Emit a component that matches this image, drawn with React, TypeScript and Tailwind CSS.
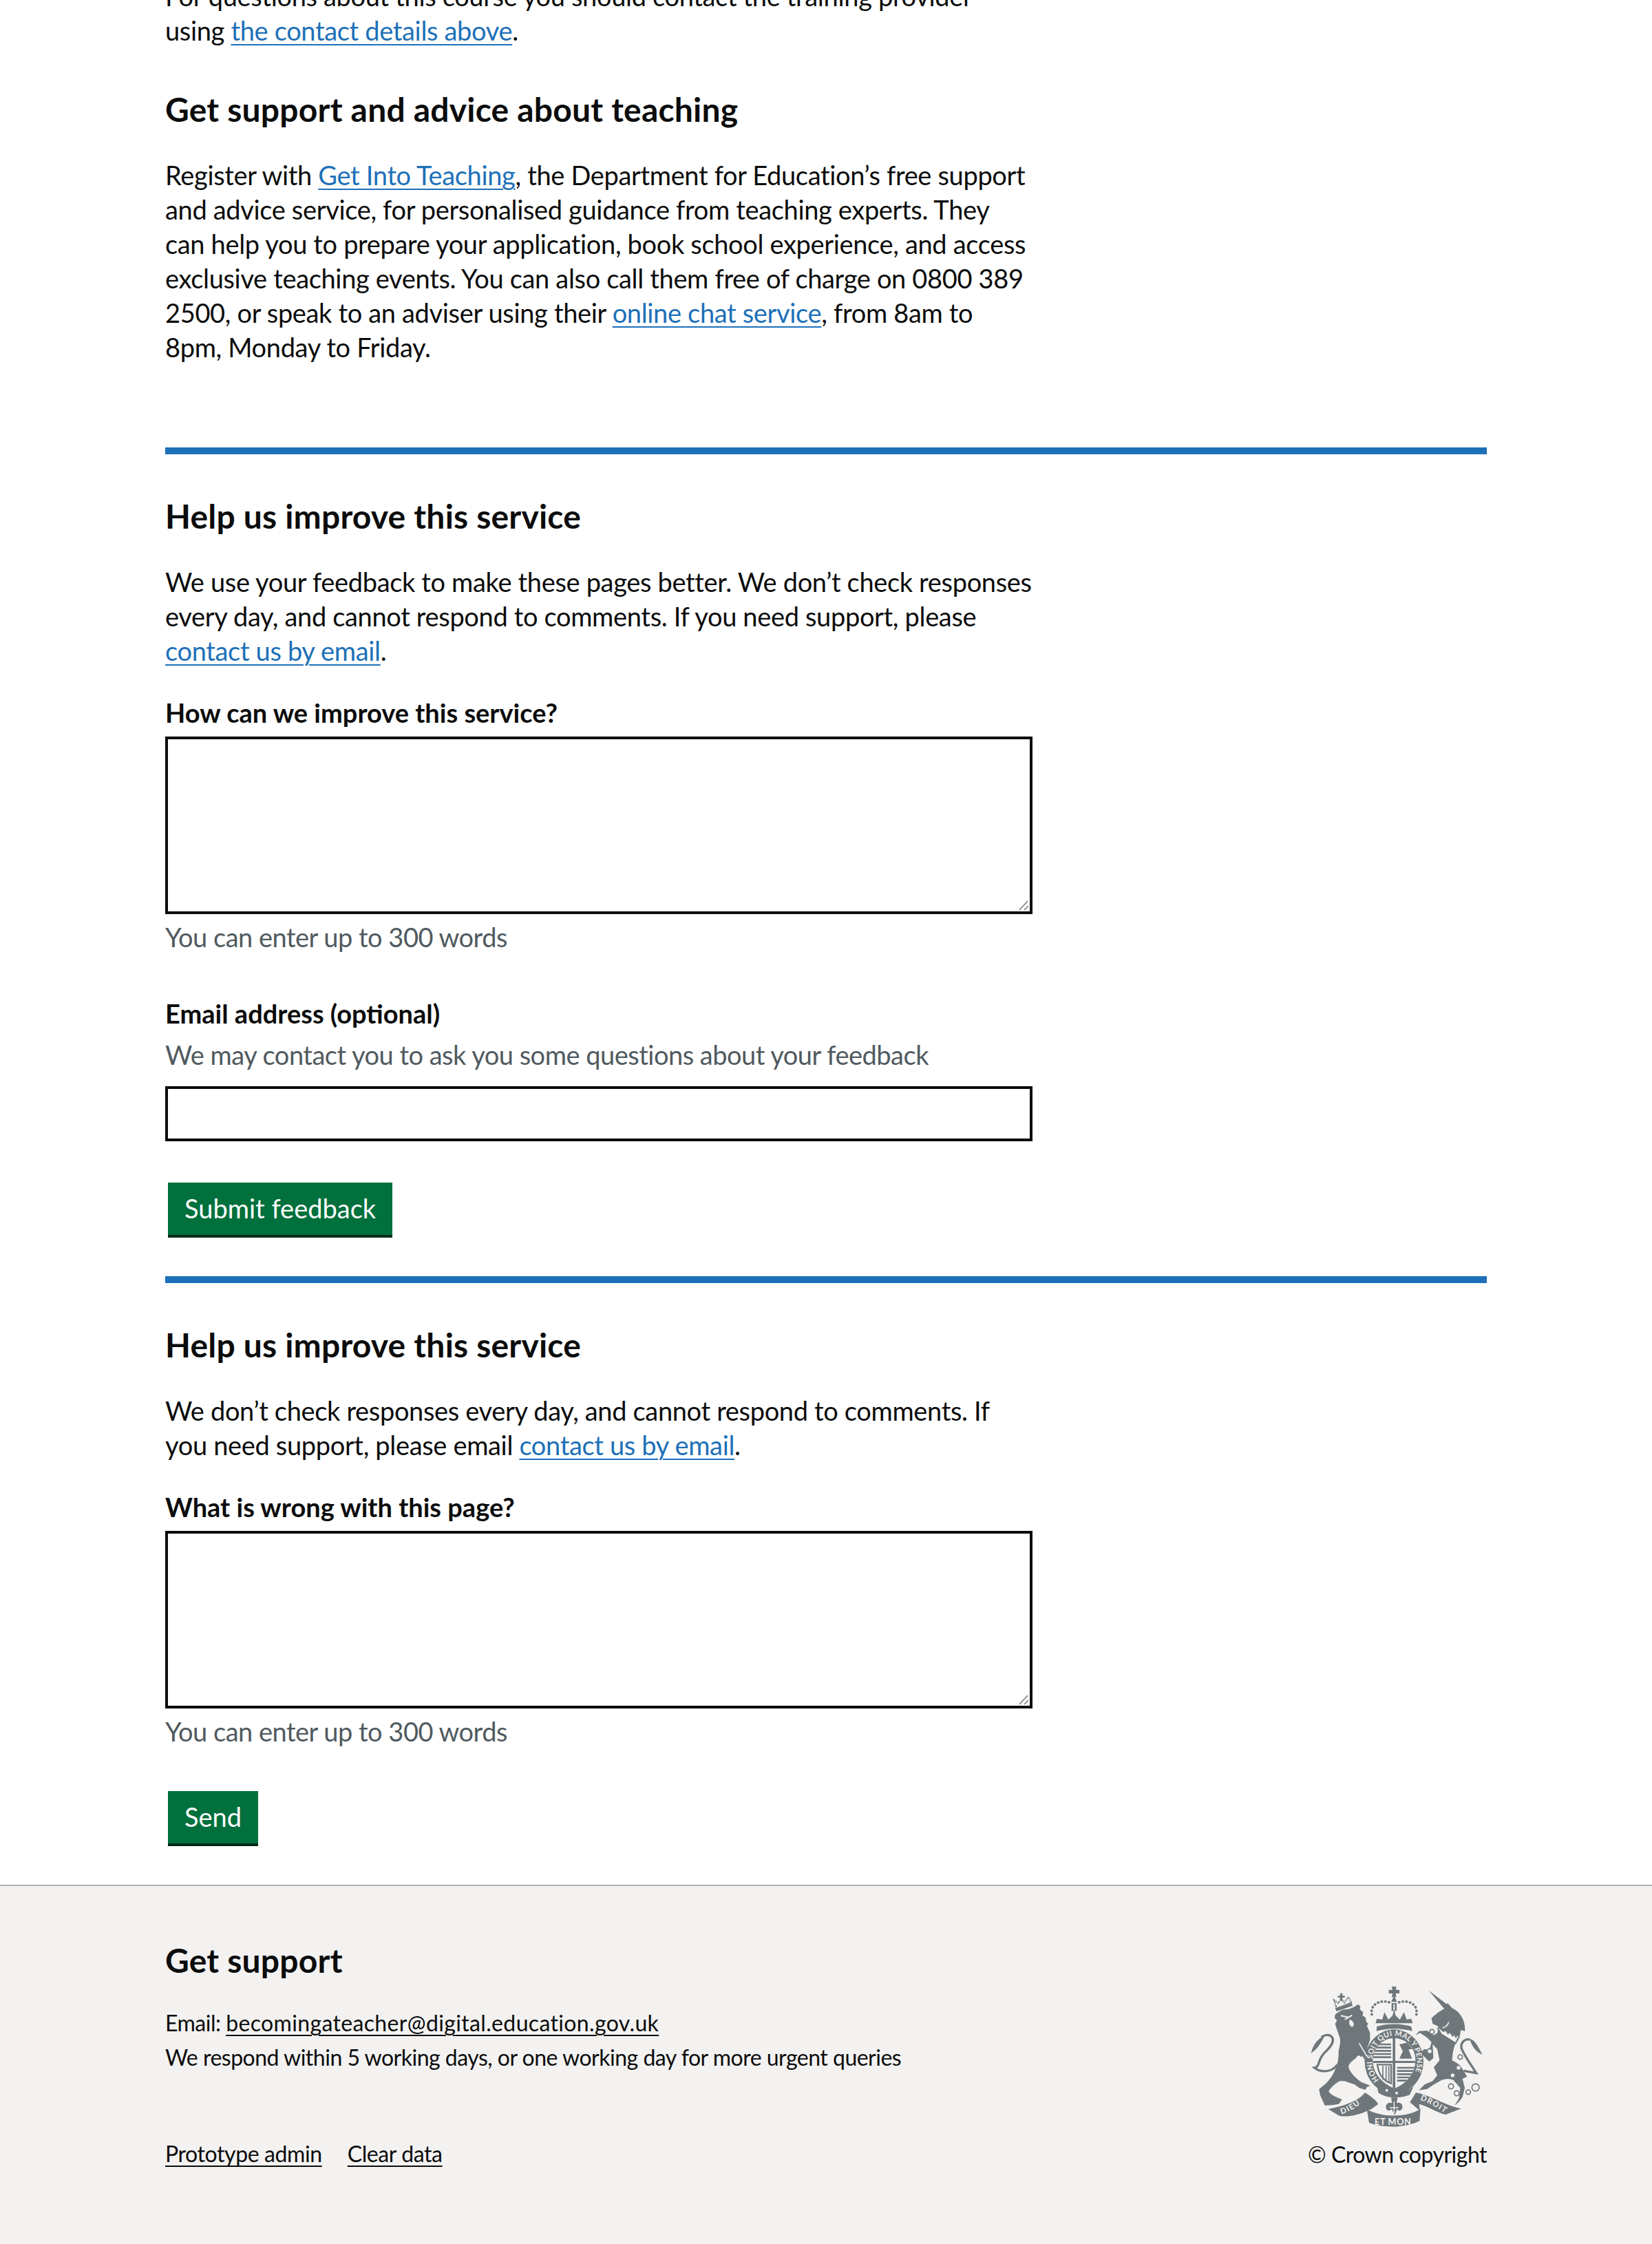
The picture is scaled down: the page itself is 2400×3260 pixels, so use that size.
import React from 'react';

const bodyText = "text-[38px] leading-[50px] tracking-[-0.34px] text-[#0b0c0c]";
const headingText = "text-[48px] leading-[60px] font-bold tracking-[0.2px] text-[#0b0c0c]";
const hintText = "text-[38px] leading-[50px] tracking-[-0.5px] text-[#505a5f]";
const labelText = "block text-[38px] leading-[50px] font-bold tracking-[0px] text-[#0b0c0c]";
const linkText = "text-[#1d70b8] underline decoration-2 underline-offset-[5px]";
const footerText = "text-[32px] leading-[50px] tracking-[-0.5px] text-[#0b0c0c]";
const footerLink = "text-[#0b0c0c] underline decoration-2 underline-offset-[5px]";

const Rule = () => <div className="h-[10px] bg-[#1d70b8]" />;

const GreenButton = ({ children }: { children: React.ReactNode }) => (
	<button className="ml-1 block h-[76px] bg-[#00703c] px-6 pb-0.5 text-[38px] leading-[50px] text-white shadow-[0_4px_0_#002d18]">
		{children}
	</button>
);

const TextArea = () => (
	<div className="relative mt-[10px] h-[258px] w-[1260px]">
		<textarea className="block h-full w-full resize-none border-4 border-[#0b0c0c] bg-white" />
		<svg viewBox="0 0 16 16" className="pointer-events-none absolute bottom-1 right-1 h-4 w-4">
			<path d="M1 14 L13 1 M8 14 L14 8" fill="none" stroke="#767676" strokeWidth="1.5" />
		</svg>
	</div>
);

const Crest = () => (
	<svg viewBox="130 75 756 621" className="block h-[207px] w-[252px]">
		<defs>
			<path id="garter" d="M431 485 A98 112 0 1 1 557 495" />
			<path id="dieu" d="M268 634 C305 622 340 602 368 572" />
			<path id="droit" d="M610 572 C650 585 690 610 722 632" />
			<clipPath id="shield">
				<path d="M497 303 C545 303 590 340 590 400 C590 460 545 505 498 522 C452 505 404 460 404 400 C404 340 450 303 497 303 Z" />
			</clipPath>
		</defs>
		<g fill="#6f777b">
			{/* royal crown */}
			<path d="M422 218 L445 222 L455 190 L472 222 L490 205 L497 178 L504 205 L522 222 L540 190 L552 222 L572 218 L578 238 L416 238 Z" />
			<path d="M422 252 C470 238 525 238 572 252 L576 272 C525 258 470 258 420 272 Z" />
			<path d="M400 200 C390 155 440 130 484 150 M594 200 C604 155 555 130 510 150" fill="none" stroke="#6f777b" strokeWidth="11" strokeDasharray="1 15" strokeLinecap="round" />
			<rect x="486" y="150" width="22" height="34" />
			<rect x="494" y="155" width="6" height="26" fill="#f3f2f1" />
			<path d="M487 78 H507 L504 92 H520 V108 H504 L507 124 H487 L490 108 H474 V92 H490 Z" />
			<path d="M497 118 L510 145 H484 Z" />
			{/* shield and garter */}
			<ellipse cx="497" cy="405" rx="128" ry="140" />
			<path d="M497 303 C545 303 590 340 590 400 C590 460 545 505 498 522 C452 505 404 460 404 400 C404 340 450 303 497 303 Z" fill="#f3f2f1" />
			<g clipPath="url(#shield)">
				<rect x="491" y="300" width="11" height="224" />
				<rect x="400" y="402" width="196" height="9" />
				<path d="M404 330 H484 M404 344 H484 M404 358 H484 M404 372 H484 M404 386 H484 M510 432 H594 M510 446 H594 M510 460 H594 M510 474 H594 M510 488 H594" fill="none" stroke="#6f777b" strokeWidth="8" />
				<path d="M520 330 L555 322 L578 350 L560 352 L575 392 L520 392 L535 360 Z" />
				<path d="M424 418 H484 V500 C455 490 430 465 424 418 Z" fill="none" stroke="#6f777b" strokeWidth="7" />
				<path d="M448 424 V484 M462 424 V492 M474 424 V498" fill="none" stroke="#6f777b" strokeWidth="5" />
			</g>
			<path d="M422 508 C450 540 540 552 582 512 L565 550 C520 568 460 565 428 540 Z" />
			<circle cx="465" cy="530" r="6" fill="#f3f2f1" />
			<circle cx="508" cy="542" r="6" fill="#f3f2f1" />
			{/* lion */}
			<path d="M240 200 C255 190 262 182 280 178 C300 178 325 168 340 155 L350 165 L348 178 L362 190 L360 205 L372 212 L376 232 L385 240 L378 248 L392 280 L392 310 L382 340 L376 370 L398 395 L402 425 L385 432 L362 392 L345 378 C325 395 305 405 298 425 C300 445 320 470 355 495 L393 510 L378 516 L372 528 L345 520 L325 505 L280 490 L260 490 C240 500 220 520 212 535 C222 552 245 560 270 570 L256 590 L226 595 L195 596 L175 552 L170 525 L200 500 C220 480 232 460 240 440 C252 415 256 385 255 360 C262 330 264 315 260 300 C252 275 245 260 240 240 L248 226 L238 215 Z" />
			<path d="M345 325 L378 382" fill="none" stroke="#f3f2f1" strokeWidth="5" />
			<path d="M350 405 L358 385 L368 400 M330 396 L340 380" fill="none" stroke="#f3f2f1" strokeWidth="5" />
			<path d="M135 368 C142 340 160 305 195 292 C180 320 165 350 135 368 Z" />
			<path d="M250 418 C225 455 175 452 150 432 C175 430 160 395 200 360 C225 335 238 315 226 298 C215 285 195 288 180 298" fill="none" stroke="#6f777b" strokeWidth="10" />
			<path d="M265 205 L298 212 M282 222 L314 203" fill="none" stroke="#f3f2f1" strokeWidth="6" />
			<path d="M304 222 C320 226 328 248 314 254 C302 250 298 235 304 222 Z" fill="#f3f2f1" />
			<path d="M244 165 L236 138 L254 150 L266 132 L280 148 L298 124 L310 146 L250 176 Z" fill="none" stroke="#6f777b" strokeWidth="7" strokeDasharray="5 4" />
			<path d="M240 172 L312 148 L316 162 L246 186 Z" />
			<path d="M262 107 H272 V118 H282 V126 H272 V140 H262 V126 H252 V118 H262 Z" />
			{/* unicorn */}
			<path d="M648 95 L733 160 L718 178 Z" />
			<path d="M660 215 L690 190 L715 175 L730 150 L750 172 C780 185 800 215 805 250 L806 272 L788 268 L782 300 L766 325 C755 345 752 372 750 400 C770 410 785 420 790 430 L815 470 L795 480 L805 520 L795 560 L780 580 L760 597 L780 565 L785 520 L755 485 C735 478 718 480 705 485 L670 505 L640 525 L605 530 L630 505 L665 490 L685 465 L670 430 L695 400 L685 350 L665 330 L668 390 L650 405 L610 365 L630 350 L650 355 L660 320 L640 300 L610 280 L590 290 L606 272 L640 270 L670 290 L686 280 L690 252 L665 240 Z" />
			<path d="M686 258 L702 285 L765 325 L780 298" fill="#f3f2f1" stroke="#6f777b" strokeWidth="6" />
			<path d="M700 263 L712 272 L722 264 L732 282 L742 274 L752 292 L762 286 L768 302" fill="none" stroke="#6f777b" strokeWidth="7" />
			<path d="M735 232 C732 245 722 255 708 258" fill="none" stroke="#f3f2f1" strokeWidth="5" />
			<path d="M800 445 L855 455 C830 415 800 375 790 345 C788 318 810 302 828 310" fill="none" stroke="#6f777b" strokeWidth="10" />
			<path d="M826 306 C852 310 865 345 882 375 C858 365 838 345 826 306 Z" />
			<circle cx="662" cy="275" r="10" fill="#f3f2f1" stroke="#6f777b" strokeWidth="5" />
			<circle cx="652" cy="360" r="11" fill="#f3f2f1" stroke="#6f777b" strokeWidth="5" />
			<circle cx="785" cy="385" r="10" fill="#f3f2f1" stroke="#6f777b" strokeWidth="5" />
			<circle cx="745" cy="513" r="11" fill="none" stroke="#6f777b" strokeWidth="5" />
			<circle cx="770" cy="543" r="11" fill="none" stroke="#6f777b" strokeWidth="5" />
			<circle cx="820" cy="538" r="10" fill="none" stroke="#6f777b" strokeWidth="5" />
			<circle cx="852" cy="518" r="16" fill="none" stroke="#6f777b" strokeWidth="5" />
			<circle cx="778" cy="432" r="8" fill="#f3f2f1" />
			<circle cx="752" cy="465" r="8" fill="#f3f2f1" />
			{/* ribbon */}
			<path d="M210 612 C270 600 340 580 370 540 C395 555 420 575 428 590 L398 612 L388 616 C345 640 280 650 255 640 Z" />
			<path d="M378 612 C440 650 550 650 612 612 L608 664 C545 695 450 695 388 672 Z" />
			<path d="M566 582 L592 540 C650 550 730 600 790 610 L722 636 C690 630 645 600 606 590 L610 620 Z" />
			<path d="M484 562 H512 L508 586 C524 580 538 592 532 610 C526 622 514 620 510 612 L500 638 L486 612 C480 620 468 622 462 610 C458 592 472 580 488 586 Z" />
			<path d="M497 578 V630 M478 606 H516" fill="none" stroke="#f3f2f1" strokeWidth="4" />
		</g>
		<g fill="#f3f2f1" fontFamily="Lato, sans-serif" fontWeight="700">
			<text fontSize="32" letterSpacing="1">
				<textPath href="#garter">HONI SOIT QUI MAL Y PENSE</textPath>
			</text>
			<text fontSize="34" letterSpacing="4">
				<textPath href="#dieu">DIEU</textPath>
			</text>
			<text fontSize="34" letterSpacing="4">
				<textPath href="#droit">DROIT</textPath>
			</text>
			<text x="412" y="680" fontSize="38" letterSpacing="2">ET MON</text>
		</g>
	</svg>
);

const App = () => {
	return (
		<div className="h-[3260px] overflow-hidden bg-white font-['Lato',sans-serif]">
			<main className="mx-[240px] -mt-[31px] pb-[60px]">
				<p className={`${bodyText} w-[1200px]`}>
					For questions about this course you should contact the training provider using{' '}
					<a className={linkText}>the contact details above</a>.
				</p>
				<h2 className={`${headingText} mt-[60px]`}>Get support and advice about teaching</h2>
				<p className={`${bodyText} mt-10 w-[1262px]`}>
					Register with <a className={linkText}>Get Into Teaching</a>, the Department for Education’s free support and advice service, for personalised guidance from teaching experts. They can help you to prepare your application, book school experience, and access exclusive teaching events. You can also call them free of charge on 0800 389 2500, or speak to an adviser using their{' '}
					<a className={linkText}>online chat service</a>, from 8am to 8pm, Monday to Friday.
				</p>
				<div className="mt-[121px]">
					<Rule />
				</div>
				<h2 className={`${headingText} mt-[60px]`}>Help us improve this service</h2>
				<p className={`${bodyText} mt-10 w-[1262px]`}>
					We use your feedback to make these pages better. We don’t check responses every day, and cannot respond to comments. If you need support, please{' '}
					<a className={linkText}>contact us by email</a>.
				</p>
				<label className={`${labelText} mt-10`}>How can we improve this service?</label>
				<TextArea />
				<p className={`${hintText} mt-2`}>You can enter up to 300 words</p>
				<label className={`${labelText} mt-[61px]`}>Email address (optional)</label>
				<p className={`${hintText} mt-[10px]`}>We may contact you to ask you some questions about your feedback</p>
				<input className="mt-[21px] block h-20 w-[1260px] border-4 border-[#0b0c0c] bg-white" />
				<div className="mt-[60px]">
					<GreenButton>Submit feedback</GreenButton>
				</div>
				<div className="mt-[60px]">
					<Rule />
				</div>
				<h2 className={`${headingText} mt-[60px]`}>Help us improve this service</h2>
				<p className={`${bodyText} mt-10 w-[1240px]`}>
					We don’t check responses every day, and cannot respond to comments. If you need support, please email{' '}
					<a className={linkText}>contact us by email</a>.
				</p>
				<label className={`${labelText} mt-10`}>What is wrong with this page?</label>
				<TextArea />
				<p className={`${hintText} mt-2`}>You can enter up to 300 words</p>
				<div className="mt-[62px]">
					<GreenButton>Send</GreenButton>
				</div>
			</main>
			<footer className="h-[522px] border-t-2 border-[#b1b4b6] bg-[#f3f2f1] px-[240px] pt-[78px]">
				<div className="flex justify-between">
					<div>
						<h2 className={headingText}>Get support</h2>
						<p className={`${footerText} mt-[36px]`}>
							Email: <a className={`${footerLink} tracking-[0.35px]`}>becomingateacher@digital.education.gov.uk</a>
						</p>
						<p className={footerText}>
							We respond within 5 working days, or one working day for more urgent queries
						</p>
						<div className={`${footerText} mt-[90px] flex gap-[37px]`}>
							<a className={`${footerLink} tracking-[-0.4px]`}>Prototype admin</a>
							<a className={`${footerLink} tracking-[-0.4px]`}>Clear data</a>
						</div>
					</div>
					<div className="flex flex-col items-end pt-[67px]">
						<div className="mr-[5px]">
							<Crest />
						</div>
						<p className={`${footerText} mt-[13px] tracking-[-0.1px]`}>© Crown copyright</p>
					</div>
				</div>
			</footer>
		</div>
	);
};

export default App;
